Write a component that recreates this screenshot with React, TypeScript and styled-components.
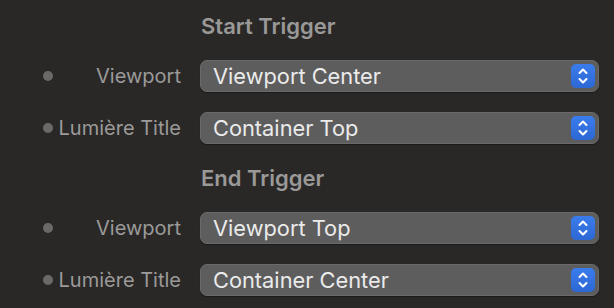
import React from "react";
import styled, { createGlobalStyle } from "styled-components";

const GlobalStyle = createGlobalStyle`
  html, body {
    margin: 0;
    padding: 0;
    background: #292827;
  }
  body {
    font-family: Inter, "Noto Sans", "DejaVu Sans", sans-serif;
    -webkit-font-smoothing: antialiased;
  }
`;

const Panel = styled.div`
  width: 614px;
  height: 308px;
  background: #292827;
  display: flex;
  flex-direction: column;
  overflow: hidden;
`;

const Section = styled.section`
  display: flex;
  flex-direction: column;
  margin-bottom: 8px;
`;

const Heading = styled.div`
  height: 60px;
  box-sizing: border-box;
  padding: 12px 0 0 201px;
  font-size: 22px;
  line-height: 28px;
  font-weight: 600;
  color: #9a9998;
`;

const Row = styled.div`
  display: grid;
  grid-template-columns: 200px 399px;
  height: 32px;
  margin-bottom: 20px;
  &:last-child {
    margin-bottom: 0;
  }
`;

const LabelCell = styled.div`
  display: flex;
  align-items: center;
  padding: 0 19px 0 43px;
`;

const Dot = styled.span`
  width: 10px;
  height: 10px;
  border-radius: 50%;
  background: #6a6968;
  flex: none;
`;

const Label = styled.span`
  flex: 1;
  text-align: right;
  font-size: 20px;
  color: #9b9a99;
  white-space: nowrap;
`;

const Select = styled.div`
  box-sizing: border-box;
  height: 32px;
  display: flex;
  align-items: center;
  justify-content: space-between;
  padding: 0 3px 0 12px;
  background: #5d5d5d;
  border: 1px solid #6a6a6a;
  border-radius: 7px;
  box-shadow: 0 1px 1px rgba(0, 0, 0, 0.35);
`;

const Value = styled.span`
  font-size: 21.8px;
  color: #ebebeb;
  white-space: nowrap;
`;

const Stepper = styled.span`
  width: 24px;
  height: 24px;
  border-radius: 5px;
  background: linear-gradient(#3a7cec, #2d68d4);
  display: flex;
  align-items: center;
  justify-content: center;
  flex: none;
`;

const StepperIcon = () => (
  <svg width="24" height="24" viewBox="0 0 24 24" fill="none">
    <path d="M8.5 9 L12 5.5 L15.5 9" stroke="#fff" strokeWidth="2" strokeLinecap="round" strokeLinejoin="round" />
    <path d="M8.5 15 L12 18.5 L15.5 15" stroke="#fff" strokeWidth="2" strokeLinecap="round" strokeLinejoin="round" />
  </svg>
);

type RowData = { label: string; value: string };
type SectionData = { title: string; rows: RowData[] };

const sections: SectionData[] = [
  {
    title: "Start Trigger",
    rows: [
      { label: "Viewport", value: "Viewport Center" },
      { label: "Lumière Title", value: "Container Top" },
    ],
  },
  {
    title: "End Trigger",
    rows: [
      { label: "Viewport", value: "Viewport Top" },
      { label: "Lumière Title", value: "Container Center" },
    ],
  },
];

export default function App() {
  return (
    <>
      <GlobalStyle />
      <Panel>
        {sections.map((s) => (
          <Section key={s.title}>
            <Heading>{s.title}</Heading>
            {s.rows.map((r) => (
              <Row key={r.label}>
                <LabelCell>
                  <Dot />
                  <Label>{r.label}</Label>
                </LabelCell>
                <Select>
                  <Value>{r.value}</Value>
                  <Stepper>
                    <StepperIcon />
                  </Stepper>
                </Select>
              </Row>
            ))}
          </Section>
        ))}
      </Panel>
    </>
  );
}
